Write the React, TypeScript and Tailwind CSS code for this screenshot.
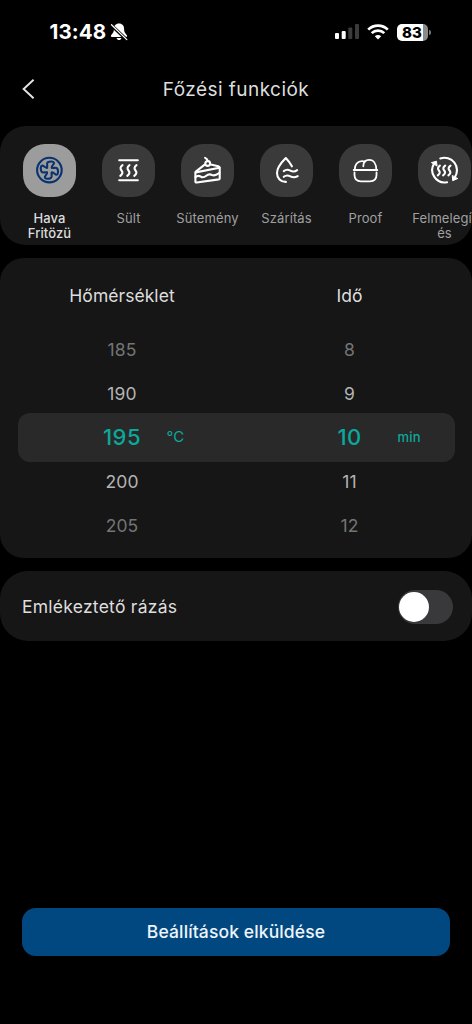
import { useState } from "react";
import type { ReactNode } from "react";
import clsx from "clsx";

type CookingMode = {
  id: string;
  label: string[];
  icon: ReactNode;
};

const FAN_BLADE =
  "M-2.4 -2.4C-1.5 -4 -3.4 -6.6 -1.5 -7.9C.5 -9 4.3 -9 4.6 -7.2C4.8 -5.600 2 -4.600 2.400 -2.400";

function FanIcon() {
  return (
    <ModeSvg>
      <circle cx="13.9" cy="13.6" r="12.3" />
      <g transform="translate(13.9 13.6)">
        <path d={FAN_BLADE} />
        <path d={FAN_BLADE} transform="rotate(90)" />
        <path d={FAN_BLADE} transform="rotate(180)" />
        <path d={FAN_BLADE} transform="rotate(270)" />
      </g>
    </ModeSvg>
  );
}

function BakeIcon() {
  return (
    <ModeSvg>
      <path d="M4.700 3.700H23.300M4.700 23.700H23.300" />
      <path d="M8 8.600C5.500 10.600 5.600 12.300 7 14S8.400 17.300 5.800 19.400" />
      <path d="M15 8.600C12.500 10.600 12.600 12.300 14 14S15.400 17.300 12.800 19.400" />
      <path d="M22 8.600C19.500 10.600 19.600 12.300 21 14S22.400 17.300 19.800 19.400" />
    </ModeSvg>
  );
}

function CakeIcon() {
  return (
    <ModeSvg>
      <path d="M11.2 8.2L2.3 15.2Q1.9 15.600 1.9 16.200V25Q1.900 26.200 3.200 26L25.300 22.900Q26.200 22.700 26.200 21.900V11.300Q26.200 10 24.900 9.700L17.200 8" />
      <path d="M2.200 15.900L26 11.200" />
      <path d="M2 20.600C4 18.900 5.500 18.900 7.300 20.100S10.900 20.800 12.800 19.200S17 17.700 18.800 18.600S22.800 18.600 26 16.400" />
      <circle cx="14.200" cy="7" r="2.400" />
      <path d="M14.200 4.500Q13.800 2.300 11.600 1.400" />
    </ModeSvg>
  );
}

function DropIcon() {
  return (
    <ModeSvg>
      <path d="M19.400 9.800C17.900 6.900 15.600 3.900 13.300 1.500C8.600 6.200 4.500 11.600 4.500 16.400C4.500 21.700 8.300 25.400 13.400 25.400" />
      <path d="M11.300 14.600c2.400-2 4.400-1.600 6.600-.4s4.200 1.400 6.700-.6" />
      <path d="M11.300 20.300c2.400-2 4.400-1.600 6.600-.4s4.400 1.400 7.300-.2" />
    </ModeSvg>
  );
}

function ProofIcon() {
  return (
    <ModeSvg thin>
      <path d="M2.200 13.500H25.800" />
      <path d="M3 16V18.500Q3 24.800 9.500 24.800H18.500Q25 24.800 25 18.500V16" />
      <path d="M3.200 13.300C3.200 8 6 4.600 10.500 4.600Q12.500 4.600 13.300 5" />
      <path d="M11.800 9.800C11.800 5.800 14.200 3.400 17.800 3.400C22.200 3.400 24.800 7.600 24.800 13.300" />
    </ModeSvg>
  );
}

function ReheatIcon() {
  return (
    <ModeSvg>
      <path d="M9.800 2A12.400 12.400 0 0 1 24.200 20.800" />
      <path d="M16.600 25.700A12.400 12.400 0 0 1 3.900 6.600" />
      <path d="M1.300 6L6 4.700L6.500 9.200Z" fill="currentColor" strokeWidth="1" />
      <path d="M21.800 19.400L22.200 24.200L26.900 22.200Z" fill="currentColor" strokeWidth="1" />
      <path d="M9.400 9.200C7 11 7.100 12.400 8.400 14S9.700 17 7.300 18.800" />
      <path d="M14.700 9.200C12.300 11 12.400 12.400 13.700 14S15 17 12.600 18.800" />
      <path d="M20 9.200C17.600 11 17.700 12.400 19 14S20.300 17 17.900 18.800" />
    </ModeSvg>
  );
}

function ModeSvg({ children, thin = false }: { children: ReactNode; thin?: boolean }) {
  return (
    <svg
      viewBox="0.5 0.5 27 27"
      className="size-[27px] overflow-visible"
      fill="none"
      stroke="currentColor"
      strokeWidth={thin ? 1.8 : 2.1}
      strokeLinecap="round"
      strokeLinejoin="round"
    >
      {children}
    </svg>
  );
}

const MODES: CookingMode[] = [
  { id: "air", label: ["Hava", "Fritözü"], icon: <FanIcon /> },
  { id: "bake", label: ["Sült"], icon: <BakeIcon /> },
  { id: "cake", label: ["Sütemény"], icon: <CakeIcon /> },
  { id: "dry", label: ["Szárítás"], icon: <DropIcon /> },
  { id: "proof", label: ["Proof"], icon: <ProofIcon /> },
  { id: "reheat", label: ["Felmelegí", "és"], icon: <ReheatIcon /> },
];

function StatusBar() {
  return (
    <div className="flex h-16 items-center justify-between pl-[49.5px] pr-[41.5px]">
      <div className="flex items-center gap-1 text-white">
        <span className="text-[20.5px] leading-6 font-bold tracking-[0.1px]">13:48</span>
        <svg viewBox="0 0 18 18" className="size-[18px]" fill="currentColor">
          <path d="M9 .6C5.700 .6 3.900 3 3.900 6C3.900 9.600 2.300 10.600 1.100 12.300C.6 13.200 1 14 1.900 14H16.100C17 14 17.400 13.200 16.900 12.300C15.700 10.600 14.100 9.600 14.100 6C14.100 3 12.300 .6 9 .6Z" />
          <path d="M6.600 14.900H11.400C11 16.300 10.200 17 9 17S7 16.300 6.600 14.900Z" />
          <path d="M1 2L17 17" stroke="#000" strokeWidth="3.2" />
          <path d="M1.500 1.800L16.800 16.600" stroke="currentColor" strokeWidth="1.300" strokeLinecap="round" />
        </svg>
      </div>
      <div className="flex items-center gap-2">
        <svg viewBox="0 0 24 16" className="h-4 w-6" fill="#fff">
          <rect x="0" y="9" width="4" height="6" rx="1" />
          <rect x="6.700" y="7" width="4" height="8" rx="1" />
          <rect x="13.300" y="3.500" width="4" height="11.500" rx="1" fill="#3b3b3b" />
          <rect x="20" y="0" width="4" height="15" rx="1" fill="#3b3b3b" />
        </svg>
        <svg viewBox="0 0 22 16" className="h-4 w-[22px]" fill="none" stroke="#fff" strokeWidth="2.700">
          <path d="M1.200 5.600A14 14 0 0 1 20.800 5.600" />
          <path d="M4.700 9.100A9 9 0 0 1 17.300 9.100" />
          <path d="M11 15.500L7.800 12.300A4.600 4.600 0 0 1 14.200 12.300Z" fill="#fff" stroke="none" />
        </svg>
        <div className="flex items-center gap-px">
          <div className="flex h-[17px] w-[31px] items-center justify-center rounded-[5px] bg-[linear-gradient(to_right,#fff_84%,#8a8a8a_84%)] text-[15px] leading-none font-extrabold text-black">
            83
          </div>
          <div className="h-[5px] w-[2px] rounded-r-full bg-[#777]" />
        </div>
      </div>
    </div>
  );
}

function Header() {
  return (
    <header className="grid h-[62px] grid-cols-[1fr_auto_1fr] items-center px-[22px] pb-3">
      <button type="button" aria-label="Vissza" className="w-fit">
        <svg viewBox="0 0 13 20" className="h-5 w-[13px]" fill="none" stroke="#e4e4e4" strokeWidth="1.900">
          <path d="M11.600 0.700L1.600 10L11.600 19.300" />
        </svg>
      </button>
      <h1 className="pt-0.5 text-[19px] leading-6 tracking-[0.45px] text-[#dedede]">
        Főzési funkciók
      </h1>
    </header>
  );
}

function ModeList({
  active,
  onSelect,
}: {
  active: string;
  onSelect: (id: string) => void;
}) {
  return (
    <section className="flex h-[119px] overflow-hidden rounded-[26px] bg-[#161616] pt-[18px] pl-[10px]">
      {MODES.map((mode) => (
        <button
          key={mode.id}
          type="button"
          onClick={() => onSelect(mode.id)}
          className={clsx(
            "flex w-[79px] shrink-0 flex-col items-center text-[13px] leading-[15.5px] tracking-[0.1px]",
            mode.id === active ? "font-medium text-[#dcdcdc]" : "text-[#a0a0a0]",
          )}
        >
          <span
            className={clsx(
              "mb-[13.5px] flex size-[53px] shrink-0 items-center justify-center rounded-[22px]",
              mode.id === active ? "bg-[#9c9c9c] text-[#0b3270]" : "bg-[#3a3a3a] text-white",
            )}
          >
            {mode.icon}
          </span>
          {mode.label.map((line) => (
            <span
              key={line}
              className={clsx("whitespace-nowrap", line === "Felmelegí" && "pr-[5px]")}
            >
              {line}
            </span>
          ))}
        </button>
      ))}
    </section>
  );
}

const ROW_COLORS = ["text-[#747474]", "text-[#b4b4b4]", "text-[#0ba89c]", "text-[#b4b4b4]", "text-[#747474]"];

function Wheel({ title, values, unit }: { title: string; values: number[]; unit: string }) {
  return (
    <div className="flex flex-col items-center">
      <h2 className="mb-5 text-[17.5px] leading-6 tracking-[0.05px] text-[#dedede]">{title}</h2>
      {values.map((value, i) => (
        <div
          key={value}
          className={clsx("relative flex h-11 items-center justify-center", ROW_COLORS[i])}
        >
          <span className={i === 2 ? "text-[22px] font-medium tracking-[0.4px]" : "pt-0.5 text-[17.5px] tracking-[0.1px]"}>
            {value}
          </span>
          {i === 2 && (
            <span
              className={clsx(
                "absolute whitespace-nowrap",
                unit === "min" ? "left-[60px] text-[13px] font-medium tracking-[0.3px]" : "left-[63.5px] text-[15px]",
              )}
            >
              {unit}
            </span>
          )}
        </div>
      ))}
    </div>
  );
}

function Picker() {
  return (
    <section className="relative h-[300px] rounded-[24px] bg-[#161616] pt-[25.5px]">
      <div className="absolute inset-x-[17.5px] top-[155px] h-[49px] rounded-[12px] bg-[#292929]" />
      <div className="relative grid grid-cols-[244px_211px]">
        <Wheel title="Hőmérséklet" values={[185, 190, 195, 200, 205]} unit="°C" />
        <Wheel title="Idő" values={[8, 9, 10, 11, 12]} unit="min" />
      </div>
    </section>
  );
}

export default function App() {
  const [mode, setMode] = useState("air");
  const [shakeReminder, setShakeReminder] = useState(false);

  return (
    <div className="flex h-screen w-full flex-col overflow-hidden bg-black font-['Inter',sans-serif]">
      <StatusBar />
      <Header />
      <main className="flex flex-1 flex-col gap-[13px]">
        <ModeList active={mode} onSelect={setMode} />
        <Picker />
        <section className="flex h-[70px] items-center justify-between rounded-[28px] bg-[#161616] pt-px pr-[19px] pl-[22px]">
          <span className="pt-px text-[17.5px] tracking-[0.25px] text-[#dedede]">Emlékeztető rázás</span>
          <button
            type="button"
            role="switch"
            aria-checked={shakeReminder}
            aria-label="Emlékeztető rázás"
            onClick={() => setShakeReminder((on) => !on)}
            className={clsx(
              "flex h-[34px] w-[55px] items-center rounded-full px-px",
              shakeReminder ? "justify-end bg-[#0ba89c]" : "bg-[#39393c]",
            )}
          >
            <span className="size-[30px] rounded-full bg-white" />
          </button>
        </section>
      </main>
      <footer className="px-[22px] pb-[68px]">
        <button
          type="button"
          className="h-12 w-full rounded-[14px] bg-[#024880] text-[17.5px] font-medium tracking-[0.12px] text-[#eef4f9]"
        >
          Beállítások elküldése
        </button>
      </footer>
    </div>
  );
}
